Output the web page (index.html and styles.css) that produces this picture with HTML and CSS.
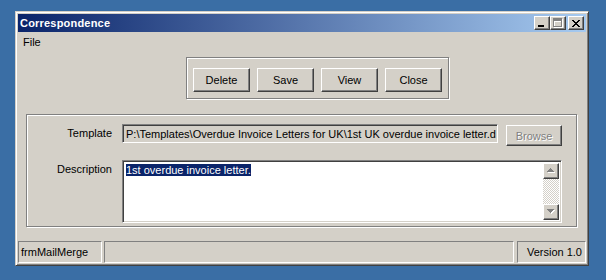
FILE: index.html
```html
<!DOCTYPE html>
<html lang="en">
<head>
    <meta charset="UTF-8">
    <title>Correspondence</title>
    <link rel="stylesheet" href="styles.css">
</head>
<body>
    <!-- Form window -->
    <div class="window">
        <div class="titlebar">
            <span class="title">Correspondence</span>
            <div class="caption-btns">
                <div class="raised cap-btn">
                    <svg width="6" height="2" viewBox="0 0 6 2" class="ico-min"><rect width="6" height="2" fill="#000"/></svg>
                </div>
                <div class="raised cap-btn">
                    <svg width="10" height="10" viewBox="0 0 10 10" shape-rendering="crispEdges">
                        <path d="M1 1h9v9h-9z M2 4v5h7v-5z" fill="#fff" fill-rule="evenodd"/>
                        <path d="M0 0h9v9h-9z M1 3v5h7v-5z" fill="#808080" fill-rule="evenodd"/>
                    </svg>
                </div>
                <div class="raised cap-btn cap-close">
                    <svg width="8" height="7" viewBox="0 0 8 7" shape-rendering="crispEdges">
                        <path d="M0 0h2v1h-2z M6 0h2v1h-2z M1 1h2v1h-2z M5 1h2v1h-2z M2 2h4v1h-4z M3 3h2v1h-2z M2 4h4v1h-4z M1 5h2v1h-2z M5 5h2v1h-2z M0 6h2v1h-2z M6 6h2v1h-2z" fill="#000"/>
                    </svg>
                </div>
            </div>
        </div>

        <div class="menubar">
            <span class="menu-item">File</span>
        </div>

        <!-- Command buttons -->
        <div class="etched actions">
            <div class="raised btn">Delete</div>
            <div class="raised btn">Save</div>
            <div class="raised btn">View</div>
            <div class="raised btn">Close</div>
        </div>

        <!-- Template details -->
        <div class="etched details">
            <label class="lbl lbl-mid">Template</label>
            <div class="row-template">
                <div class="sunken field">P:\Templates\Overdue Invoice Letters for UK\1st UK overdue invoice letter.d</div>
                <div class="raised btn btn-disabled">Browse</div>
            </div>
            <label class="lbl lbl-top">Description</label>
            <div class="sunken memo">
                <div class="memo-text"><span class="selected">1st overdue invoice letter.</span></div>
                <div class="scrollbar">
                    <div class="raised sb-btn">
                        <svg width="8" height="5" viewBox="0 0 8 5" shape-rendering="crispEdges">
                            <path d="M4 1h1v1h-1z M3 2h3v1h-3z M2 3h5v1h-5z M1 4h7v1h-7z" fill="#fff"/>
                            <path d="M3 0h1v1h-1z M2 1h3v1h-3z M1 2h5v1h-5z M0 3h7v1h-7z" fill="#808080"/>
                        </svg>
                    </div>
                    <div class="sb-track"></div>
                    <div class="raised sb-btn">
                        <svg width="8" height="5" viewBox="0 0 8 5" shape-rendering="crispEdges">
                            <path d="M1 1h7v1h-7z M2 2h5v1h-5z M3 3h3v1h-3z M4 4h1v1h-1z" fill="#fff"/>
                            <path d="M0 0h7v1h-7z M1 1h5v1h-5z M2 2h3v1h-3z M3 3h1v1h-1z" fill="#808080"/>
                        </svg>
                    </div>
                </div>
            </div>
        </div>

        <!-- Status bar -->
        <div class="statusbar">
            <div class="panel panel-name">frmMailMerge</div>
            <div class="panel panel-fill"></div>
            <div class="panel panel-version">Version 1.0</div>
        </div>
    </div>
</body>
</html>
```

FILE: styles.css
```css
/* General Styling */
body {
    background-color: #3a6ea5;
    margin: 0;
    padding: 11px 0 0 15px;
    font-family: "Liberation Sans", Arial, sans-serif;
    font-size: 11px;
    color: #000;
}

/* Window frame */
.window {
    box-sizing: border-box;
    width: 574px;
    height: 255px;
    background-color: #d4d0c8;
    border: 1px solid;
    border-color: #d4d0c8 #404040 #404040 #d4d0c8;
    box-shadow: inset 1px 1px #fff, inset -1px -1px #808080;
    padding: 2px;
    display: flex;
    flex-direction: column;
}

/* 3D helpers */
.raised {
    box-sizing: border-box;
    background-color: #d4d0c8;
    border: 1px solid;
    border-color: #fff #404040 #404040 #fff;
    box-shadow: inset -1px -1px #808080;
}

.sunken {
    box-sizing: border-box;
    border: 1px solid;
    border-color: #808080 #fff #fff #808080;
    box-shadow: inset 1px 1px #404040, inset -1px -1px #d4d0c8;
}

.etched {
    box-sizing: border-box;
    border: 1px solid #808080;
    box-shadow: inset 1px 1px #fff, 1px 1px #fff;
    align-self: flex-start;
}

/* Title bar */
.titlebar {
    height: 18px;
    flex: none;
    background: linear-gradient(to right, #0a246a, #a6caf0);
    display: flex;
    align-items: center;
    justify-content: space-between;
    padding: 0 2px;
}

.title {
    color: #fff;
    font-weight: bold;
    font-size: 11px;
    letter-spacing: 0.2px;
}

.caption-btns {
    display: flex;
    align-items: center;
}

.cap-btn {
    width: 16px;
    height: 14px;
    display: flex;
    align-items: center;
    justify-content: center;
}

.cap-btn svg {
    display: block;
}

.ico-min {
    margin-top: 6px;
    margin-right: 2px;
}

.cap-close {
    margin-left: 2px;
}

/* Menu */
.menubar {
    height: 19px;
    flex: none;
    display: flex;
    align-items: center;
    padding-left: 5px;
}

/* Button group */
.actions {
    margin: 6px 0 0 168px;
    padding: 10px 6px 6px 6px;
    display: flex;
    gap: 7px;
}

.btn {
    width: 57px;
    height: 24px;
    display: flex;
    align-items: center;
    justify-content: center;
}

.btn-disabled {
    width: 56px;
    height: 21px;
    margin-top: 1px;
    color: #808080;
    text-shadow: 1px 1px #fff;
}

/* Details group */
.details {
    width: 551px;
    height: 113px;
    margin: 15px 0 0 8px;
    padding: 9px 14px 0 0;
    display: grid;
    grid-template-columns: 85px 1fr;
    column-gap: 10px;
    row-gap: 10px;
    align-items: start;
}

.lbl {
    text-align: right;
}

.lbl-mid {
    padding-top: 3px;
}

.lbl-top {
    padding-top: 3px;
}

.row-template {
    display: flex;
    gap: 8px;
    height: 22px;
}

.field {
    width: 376px;
    height: 19px;
    background-color: #d4d0c8;
    padding: 2px 2px 0 3px;
    white-space: nowrap;
    overflow: hidden;
    line-height: 14px;
}

.memo {
    height: 63px;
    background-color: #fff;
    padding: 2px;
    display: flex;
}

.memo-text {
    flex: 1;
    padding: 1px 1px;
    line-height: 13px;
}

.selected {
    background-color: #0a246a;
    color: #fff;
}

.scrollbar {
    width: 16px;
    display: flex;
    flex-direction: column;
}

.sb-btn {
    width: 16px;
    height: 16px;
    display: flex;
    align-items: center;
    justify-content: center;
}

.sb-track {
    flex: 1;
    background: repeating-conic-gradient(#fff 0 25%, #d4d0c8 0 50%) 0 0 / 2px 2px;
}

/* Status bar */
.statusbar {
    margin-top: 14px;
    height: 22px;
    display: flex;
    gap: 2px;
}

.panel {
    box-sizing: border-box;
    border: 1px solid;
    border-color: #808080 #fff #fff #808080;
    display: flex;
    align-items: center;
    padding: 0 2px;
}

.panel-name {
    width: 84px;
}

.panel-fill {
    flex: 1;
}

.panel-version {
    width: 69px;
    margin-left: 1px;
    justify-content: flex-end;
    padding-right: 3px;
}
```
